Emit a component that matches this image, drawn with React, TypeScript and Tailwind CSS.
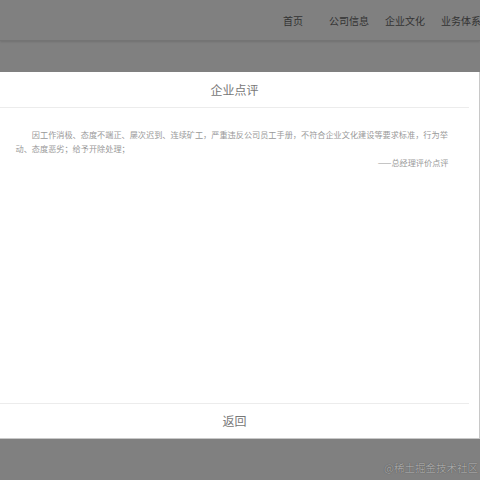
import React from "react";

const NAV = ["首页", "公司信息", "企业文化", "业务体系"];

const CJK = "font-['Microsoft_YaHei','Noto_Sans_CJK_SC',sans-serif]";

export default function App() {
  return (
    <div className={`relative h-[480px] w-[480px] overflow-hidden bg-[#808080] ${CJK}`}>
      {/* Header under the mask */}
      <header className="flex h-[41px] items-center whitespace-nowrap border-b border-[#747474] pl-[265px] shadow-[0_1px_2px_rgba(0,0,0,0.12)]">
        {NAV.map((item) => (
          <span key={item} className="w-[56px] shrink-0 text-center text-[10px] text-[#333]">
            {item}
          </span>
        ))}
      </header>

      {/* Modal */}
      <section className="ml-[-10px] mt-[31px] flex h-[367px] w-[490px] flex-col border-b border-r border-[#c8c8c8] bg-white">
        <div className="flex h-[35px] items-center justify-center text-[12px] text-[#777]">企业点评</div>
        <div className="mx-[10px] h-px bg-[#ececec]" />

        <div className="flex-1 pl-[25.5px] pt-[20px]">
          <div className="w-[433px] text-[8.16px] leading-[14px] text-[#999]">
            <p className="indent-[2em]">
              因工作消极、态度不端正、屡次迟到、连续矿工，严重违反公司员工手册，不符合企业文化建设等要求标准，行为举动、态度恶劣；给予开除处理；
            </p>
            <p className="text-right">——总经理评价点评</p>
          </div>
        </div>

        <div className="mx-[10px] h-px bg-[#ececec]" />
        <div className="flex h-[34px] items-center justify-center text-[12px] text-[#777]">返回</div>
      </section>

      {/* Watermark */}
      <span className="absolute bottom-[4px] right-[2px] text-[10.5px] text-[#a6a6a6] [text-shadow:0_0_1px_rgba(0,0,0,0.5)]">
        @稀土掘金技术社区
      </span>
    </div>
  );
}
